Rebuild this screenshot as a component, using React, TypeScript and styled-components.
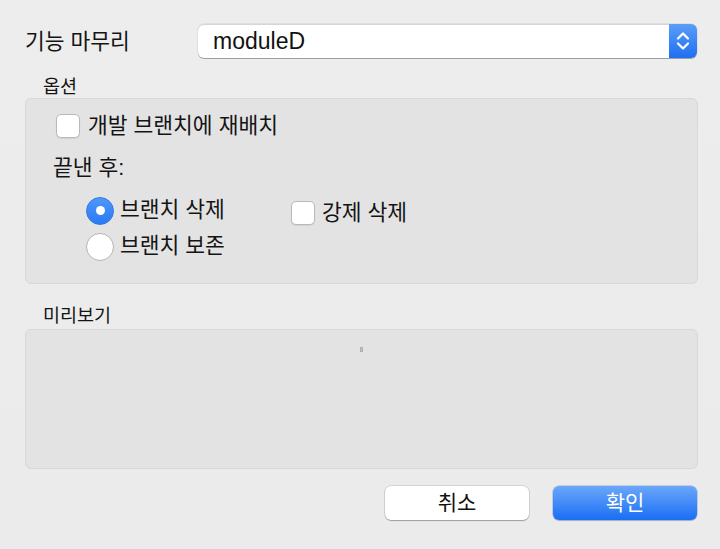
import styled, { createGlobalStyle } from "styled-components";

const GlobalStyle = createGlobalStyle`
  html, body {
    margin: 0;
    padding: 0;
    background: #ececec;
  }
  body {
    font-family: "Liberation Sans", "Noto Sans CJK KR", sans-serif;
    color: #141414;
  }
`;

const Dialog = styled.div`
  width: 720px;
  height: 549px;
  box-sizing: border-box;
  padding: 24px 22px 0 25px;
  display: flex;
  flex-direction: column;
  background: linear-gradient(#ededed, #ebebeb);
`;

const TopRow = styled.div`
  display: flex;
  align-items: center;
  height: 34px;
`;

const TopLabel = styled.div`
  width: 173px;
  font-size: 21.5px;
  line-height: 24px;
  margin-top: 2px;
`;

const Select = styled.div`
  flex: 1;
  margin-right: 1px;
  height: 34px;
  display: flex;
  background: #fff;
  border-radius: 6px;
  box-shadow: 0 0 0 0.5px rgba(0, 0, 0, 0.12), 0 1px 0 rgba(0, 0, 0, 0.28), inset 0 1px 0 #d6d6d6;
  overflow: hidden;
`;

const SelectValue = styled.div`
  flex: 1;
  padding-left: 15px;
  font-size: 23px;
  line-height: 34px;
  color: #111;
`;

const Stepper = styled.div`
  width: 28px;
  display: flex;
  align-items: center;
  justify-content: center;
  background: linear-gradient(#5a9ef8, #1f6ff2);
`;

const SectionLabel = styled.div<{ $top: number }>`
  margin-top: ${(p) => p.$top}px;
  padding-left: 18px;
  font-size: 18.5px;
  line-height: 20px;
`;

const Panel = styled.div<{ $height: number }>`
  box-sizing: border-box;
  height: ${(p) => p.$height}px;
  background: #e3e3e3;
  border: 1px solid #d8d8d8;
  border-radius: 6px;
`;

const OptionsPanel = styled(Panel)`
  margin-top: 1px;
  padding: 15px 0 0 30px;
  display: flex;
  flex-direction: column;
`;

const Option = styled.label`
  display: flex;
  align-items: center;
  gap: 8px;
  font-size: 21.5px;
  line-height: 24px;
  height: 24px;
`;

const Box = styled.span`
  box-sizing: border-box;
  flex: none;
  width: 24px;
  height: 24px;
  background: #fff;
  border: 1px solid #b9b9b9;
  border-radius: 5px;
  box-shadow: 0 1px 1px rgba(0, 0, 0, 0.08);
`;

const SubLabel = styled.div`
  margin: 18px 0 0 -3px;
  font-size: 21.5px;
  line-height: 24px;
`;

const RadioGrid = styled.div`
  margin: 17px 0 0 30px;
  display: grid;
  grid-template-columns: 205px auto;
  row-gap: 8px;
`;

const RadioRow = styled.label`
  display: flex;
  align-items: center;
  gap: 6px;
  font-size: 21.5px;
  line-height: 27px;
  height: 27px;
`;

const Radio = styled.span<{ $on?: boolean }>`
  box-sizing: border-box;
  flex: none;
  width: 28px;
  height: 28px;
  border-radius: 50%;
  display: flex;
  align-items: center;
  justify-content: center;
  background: ${(p) => (p.$on ? "linear-gradient(#4f97f8, #2a7af3)" : "#fff")};
  border: 1px solid ${(p) => (p.$on ? "#2f78e6" : "#b4b4b4")};
  &::after {
    content: "";
    display: ${(p) => (p.$on ? "block" : "none")};
    width: 9px;
    height: 9px;
    border-radius: 50%;
    background: #fff;
  }
`;

const ForceOption = styled(Option)`
  margin-top: 4px;
  align-self: start;
  gap: 7px;
`;

const PreviewPanel = styled(Panel)`
  margin-top: 3px;
  display: flex;
  justify-content: center;
  padding-top: 17px;
`;

const Caret = styled.span`
  width: 3px;
  height: 5px;
  background: #c2c2c2;
  border: 0.5px solid #b0b0b0;
  box-sizing: border-box;
`;

const ButtonRow = styled.div`
  margin-top: 17px;
  display: flex;
  justify-content: flex-end;
  gap: 24px;
  padding-right: 1px;
`;

const Button = styled.button<{ $primary?: boolean }>`
  width: 144px;
  height: 34px;
  border: none;
  border-radius: 6px;
  font-family: inherit;
  font-size: 21px;
  line-height: 34px;
  padding: 0;
  color: ${(p) => (p.$primary ? "#fff" : "#111")};
  background: ${(p) => (p.$primary ? "linear-gradient(#6ba7fa, #1a6ef5)" : "#fff")};
  box-shadow: ${(p) =>
    p.$primary
      ? "0 0 0 0.5px rgba(0, 60, 180, 0.35), 0 1px 1px rgba(0, 0, 0, 0.15)"
      : "0 0 0 0.5px rgba(0, 0, 0, 0.2), 0 1px 1px rgba(0, 0, 0, 0.25)"};
`;

function Chevrons() {
  return (
    <svg width="16" height="24" viewBox="0 0 16 24">
      <path d="M3 9.5 L8 4.5 L13 9.5" fill="none" stroke="#fff" strokeWidth="2.2" strokeLinecap="round" strokeLinejoin="round" />
      <path d="M3 14.5 L8 19.5 L13 14.5" fill="none" stroke="#fff" strokeWidth="2.2" strokeLinecap="round" strokeLinejoin="round" />
    </svg>
  );
}

export default function App() {
  return (
    <>
      <GlobalStyle />
      <Dialog>
        <TopRow>
          <TopLabel>기능 마무리</TopLabel>
          <Select>
            <SelectValue>moduleD</SelectValue>
            <Stepper>
              <Chevrons />
            </Stepper>
          </Select>
        </TopRow>

        <SectionLabel $top={19}>옵션</SectionLabel>
        <OptionsPanel $height={186}>
          <Option>
            <Box />
            개발 브랜치에 재배치
          </Option>
          <SubLabel>끝낸 후:</SubLabel>
          <RadioGrid>
            <RadioRow>
              <Radio $on />
              브랜치 삭제
            </RadioRow>
            <ForceOption>
              <Box />
              강제 삭제
            </ForceOption>
            <RadioRow>
              <Radio />
              브랜치 보존
            </RadioRow>
          </RadioGrid>
        </OptionsPanel>

        <SectionLabel $top={22}>미리보기</SectionLabel>
        <PreviewPanel $height={140}>
          <Caret />
        </PreviewPanel>

        <ButtonRow>
          <Button>취소</Button>
          <Button $primary>확인</Button>
        </ButtonRow>
      </Dialog>
    </>
  );
}
